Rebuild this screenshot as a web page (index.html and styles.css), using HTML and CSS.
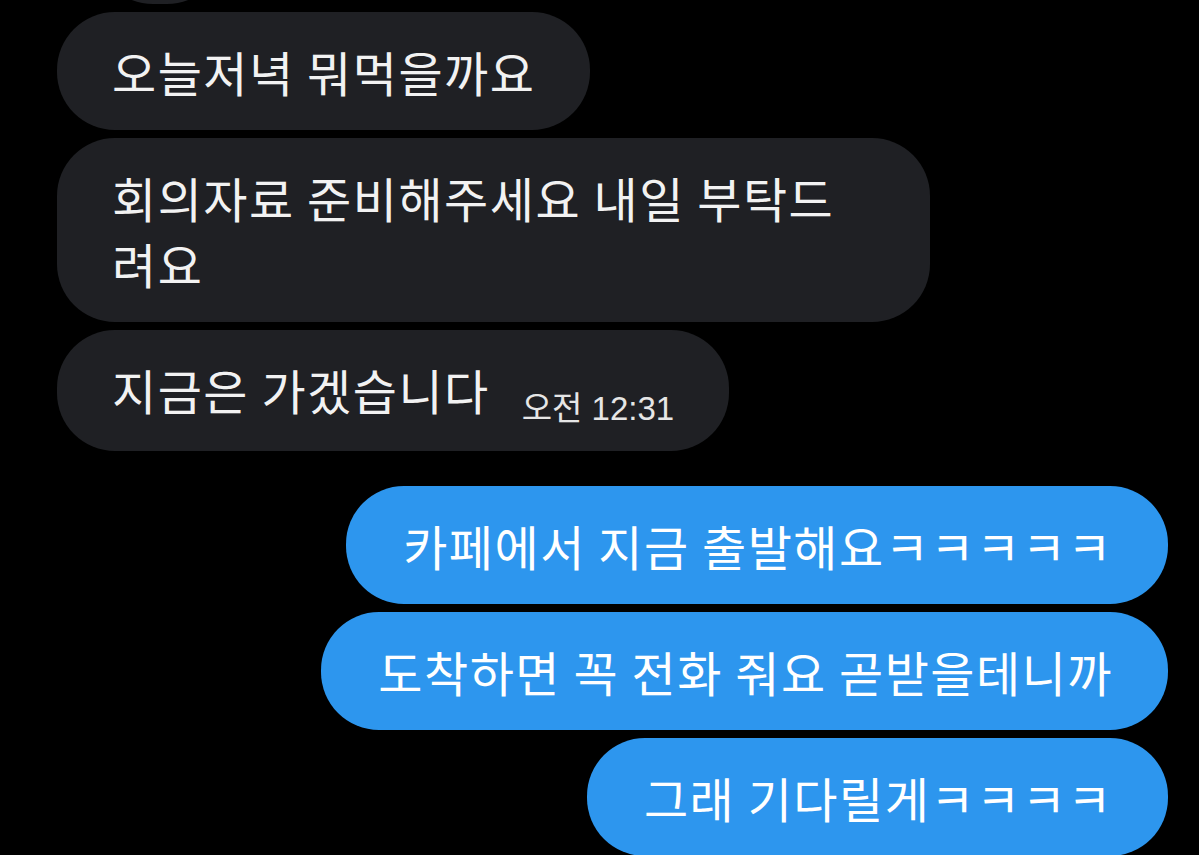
FILE: index.html
```html
<!DOCTYPE html>
<html lang="ko">
<head>
<meta charset="utf-8">
<link rel="stylesheet" href="styles.css">
</head>
<body>
  <div class="chat">
    <div class="group incoming">
      <div class="bubble cut">&nbsp;</div>
      <div class="bubble">오늘저녁 뭐먹을까요</div>
      <div class="bubble">회의자료 준비해주세요 내일 부탁드려요</div>
      <div class="bubble">지금은 가겠습니다<span class="time">오전 12:31</span></div>
    </div>
    <div class="group outgoing">
      <div class="bubble">카페에서 지금 출발해요ㅋㅋㅋㅋㅋ</div>
      <div class="bubble">도착하면 꼭 전화 줘요 곧받을테니까</div>
      <div class="bubble">그래 기다릴게ㅋㅋㅋㅋ</div>
    </div>
  </div>
</body>
</html>
```
FILE: styles.css
```css
html, body {
  margin: 0;
  padding: 0;
  background: #000;
  overflow: hidden;
  height: 855px;
}
.chat {
  font-family: "Noto Sans CJK KR", "Noto Sans", sans-serif;
  color: #f2f2f2;
  display: flex;
  flex-direction: column;
  gap: 35px;
  padding: 12px 31px 0 57px;
}
.group {
  display: flex;
  flex-direction: column;
  gap: 8px;
}
.incoming { align-items: flex-start; }
.outgoing { align-items: flex-end; }
.bubble {
  font-size: 48px;
  line-height: 66px;
  padding: 26px 55px 26px 55px;
  border-radius: 58px;
  max-width: 763px;
  letter-spacing: 1.5px;
  word-spacing: -2.5px;
}
.incoming .bubble { background: #1f2024; }
.outgoing .bubble {
  background: #2d96ee;
  color: #fff;
  max-width: 900px;
  padding-left: 57px;
  padding-right: 55px;
}
.bubble.cut {
  margin-top: -126px;
  margin-left: 38px;
  width: 20px;
}
.time {
  font-family: "Liberation Sans", "Noto Sans CJK KR", sans-serif;
  font-size: 33px;
  line-height: 1;
  letter-spacing: 0;
  word-spacing: 0;
  margin-left: 32px;
  color: #e6e6e6;
  vertical-align: -10px;
}
```
